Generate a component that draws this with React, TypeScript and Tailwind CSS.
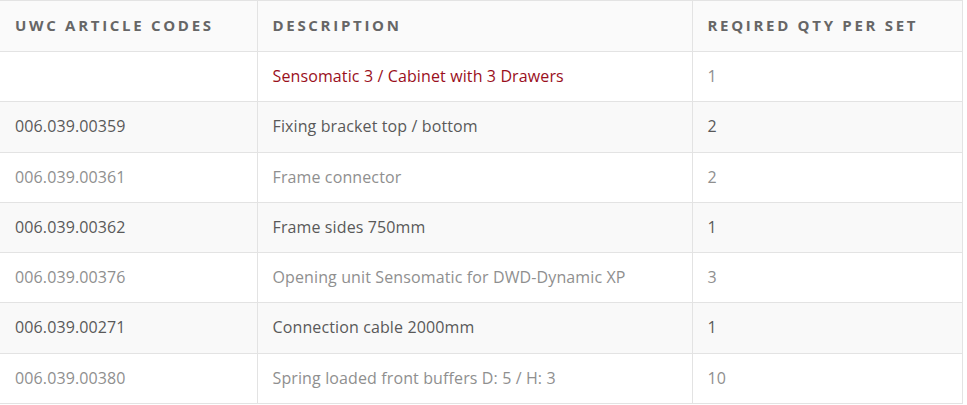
const rows = [
  { code: '', desc: 'Sensomatic 3 / Cabinet with 3 Drawers', qty: '1', highlight: true },
  { code: '006.039.00359', desc: 'Fixing bracket top / bottom', qty: '2' },
  { code: '006.039.00361', desc: 'Frame connector', qty: '2' },
  { code: '006.039.00362', desc: 'Frame sides 750mm', qty: '1' },
  { code: '006.039.00376', desc: 'Opening unit Sensomatic for DWD-Dynamic XP', qty: '3' },
  { code: '006.039.00271', desc: 'Connection cable 2000mm', qty: '1' },
  { code: '006.039.00380', desc: 'Spring loaded front buffers D: 5 / H: 3', qty: '10' },
];

export default function App() {
  return (
    <div className="w-[967px] h-[405px] bg-white overflow-hidden" style={{ fontFamily: '"Open Sans", sans-serif' }}>
      <table className="w-[963px] border-collapse text-[16px] tracking-[0.12px] text-left">
        <thead>
          <tr className="bg-[#fafafa]">
            <th className="w-[257px] border-t border-b border-r border-[#e3e3e3] px-[15px] pt-3 pb-[14px] leading-6 text-[15px] font-bold uppercase tracking-[2.7px] text-[#666]">
              UWC Article Codes
            </th>
            <th className="w-[435px] border-t border-b border-r border-[#e3e3e3] px-[15px] pt-3 pb-[14px] leading-6 text-[15px] font-bold uppercase tracking-[2.7px] text-[#666]">
              Description
            </th>
            <th className="border-t border-b border-r border-[#e3e3e3] px-[15px] pt-3 pb-[14px] leading-6 text-[15px] font-bold uppercase tracking-[2.7px] text-[#666]">
              Reqired Qty per Set
            </th>
          </tr>
        </thead>
        <tbody>
          {rows.map((r, i) => {
            const even = i % 2 === 1;
            const text = even ? 'text-[#595959]' : 'text-[#8f8f8f]';
            return (
              <tr key={i} className={even ? 'bg-[#f9f9f9]' : 'bg-white'}>
                <td className={`border-b border-r border-[#e3e3e3] px-[15px] py-3 leading-[25.3px] ${text}`}>{r.code}</td>
                <td className={`border-b border-r border-[#e3e3e3] px-[15px] py-3 leading-[25.3px] ${r.highlight ? 'text-[#9a0f1c]' : text}`}>{r.desc}</td>
                <td className={`border-b border-r border-[#e3e3e3] px-[15px] py-3 leading-[25.3px] ${text}`}>{r.qty}</td>
              </tr>
            );
          })}
        </tbody>
      </table>
    </div>
  );
}
